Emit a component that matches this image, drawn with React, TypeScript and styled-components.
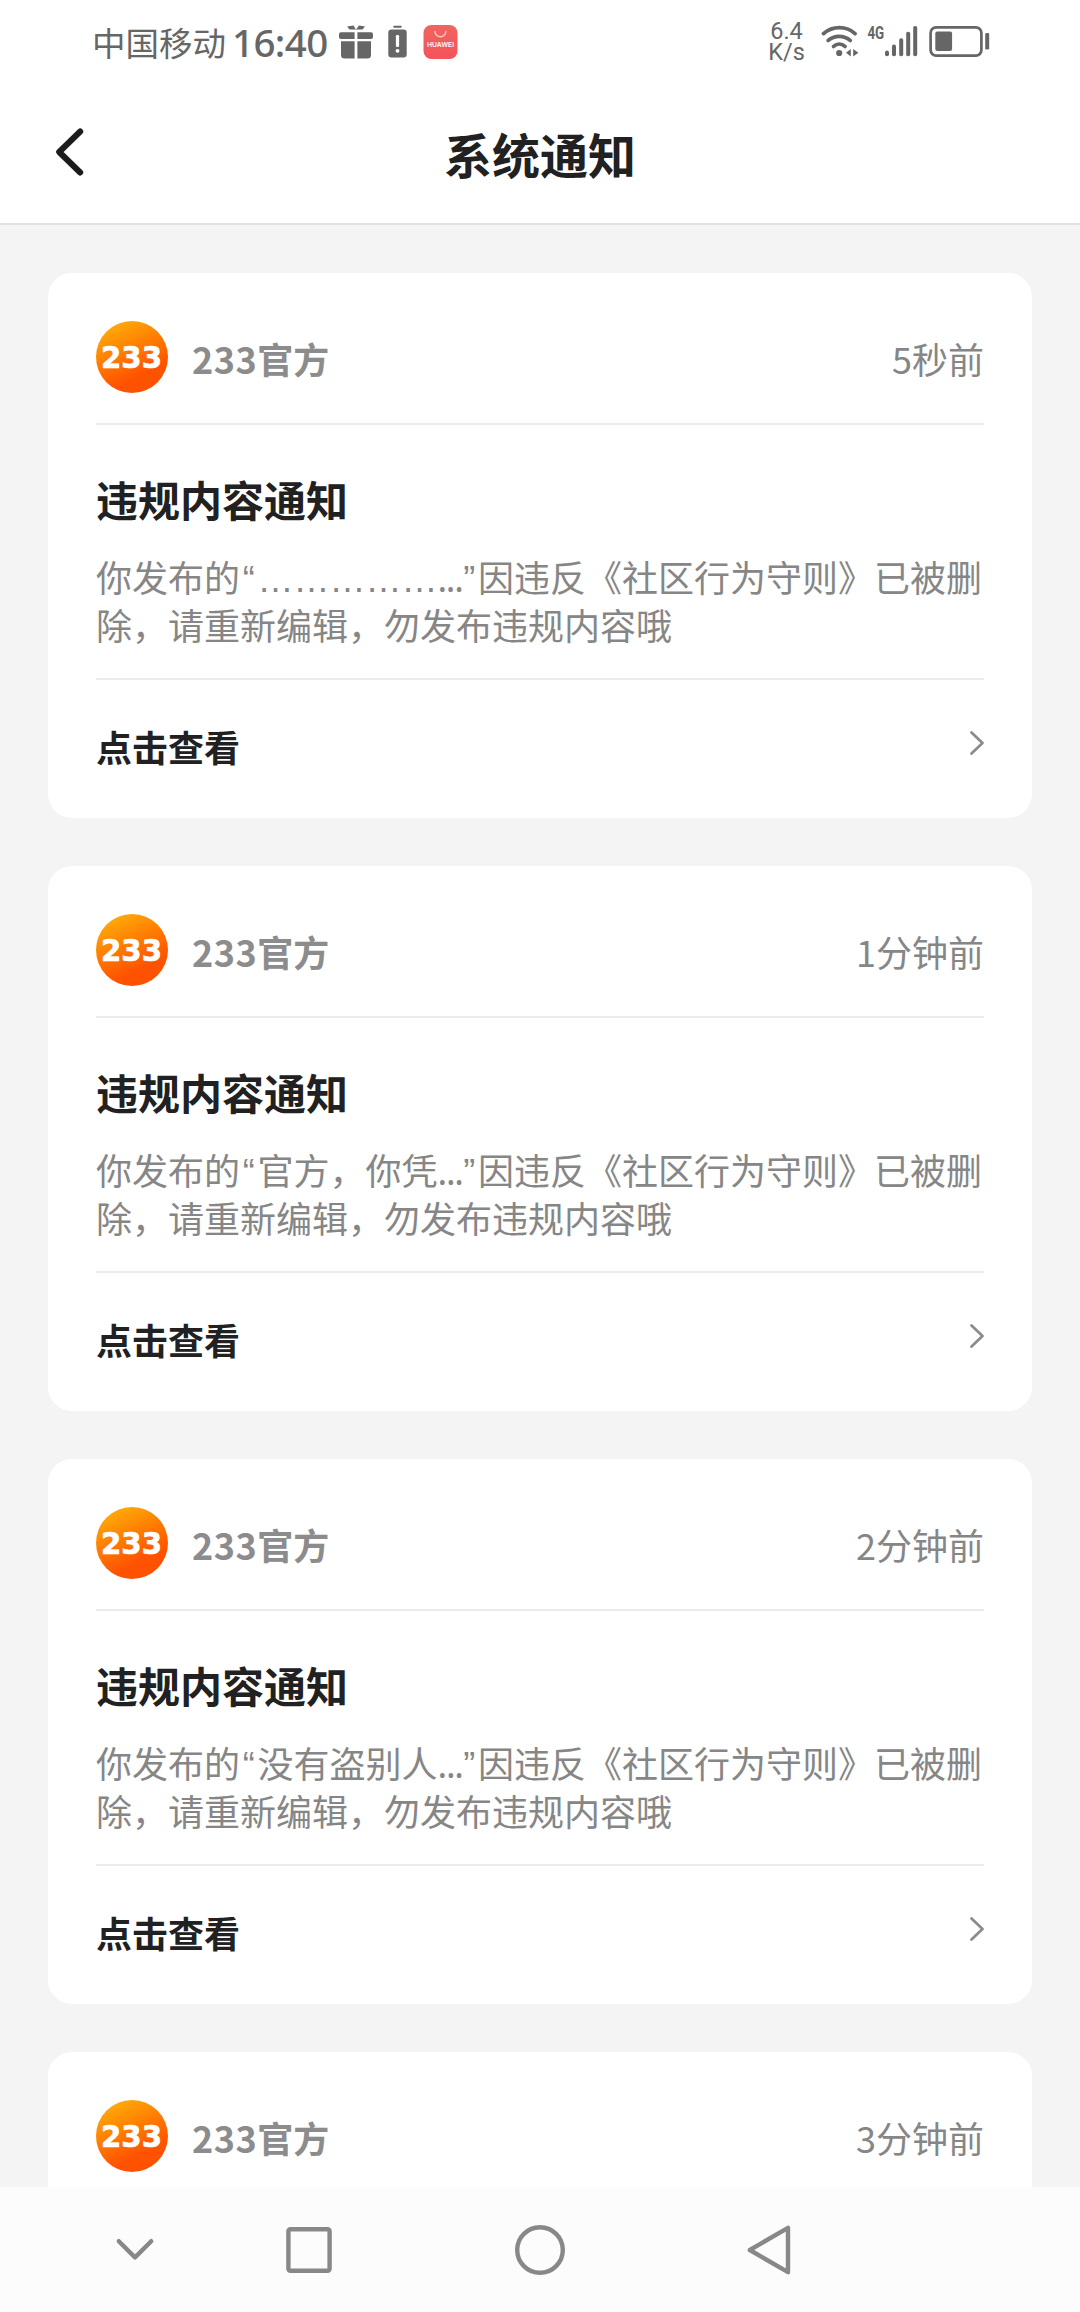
import React from 'react';
import styled, { createGlobalStyle } from 'styled-components';

const GlobalStyle = createGlobalStyle`
  *, *::before, *::after { box-sizing: border-box; }
  body {
    margin: 0;
    background: #f4f4f4;
    font-family: "Noto Sans CJK SC", "Noto Sans", sans-serif;
  }
`;

const Screen = styled.div`
  width: 1080px;
  height: 2312px;
  display: flex;
  flex-direction: column;
  overflow: hidden;
  background: #f4f4f4;
`;

/* ---------- status bar ---------- */

const StatusBar = styled.div`
  flex: none;
  height: 84px;
  padding: 0 90px 0 92px;
  display: flex;
  justify-content: space-between;
  align-items: center;
  background: #fff;
  color: #666;
`;

const StatusGroup = styled.div`
  display: flex;
  align-items: center;
`;

const Carrier = styled.span`
  font-size: 33.5px;
  line-height: 48px;
  margin-right: 6px;
`;

const Clock = styled.span`
  width: 99px;
  font-family: "Noto Sans", sans-serif;
  font-size: 38.5px;
  line-height: 48px;
  font-weight: 500;
  letter-spacing: -0.6px;
  margin-right: 8px;
  white-space: nowrap;
`;

const NetSpeed = styled.div`
  display: flex;
  flex-direction: column;
  align-items: center;
  width: 33px;
  margin-right: 18px;
  font-family: Roboto, sans-serif;
  font-size: 23.5px;
  line-height: 21px;
`;

const StatusIcon = styled.svg<{ $gap?: number }>`
  display: block;
  flex: none;
  margin-left: ${(p) => p.$gap ?? 0}px;
`;

/* ---------- title bar ---------- */

const TitleBar = styled.header`
  flex: none;
  height: 141px;
  padding: 0 52px;
  display: grid;
  grid-template-columns: 60px 1fr 60px;
  align-items: center;
  background: #fff;
  border-bottom: 2px solid #e2e2e2;
`;

const BackButton = styled.button`
  width: 40px;
  height: 56px;
  margin-top: -4px;
  padding: 0;
  border: 0;
  background: none;
`;

const PageTitle = styled.h1`
  margin: -2px 0 0;
  font-size: 48px;
  line-height: 70px;
  font-weight: 700;
  text-align: center;
  color: #212121;
`;

/* ---------- list ---------- */

const List = styled.main`
  flex: 1;
  min-height: 0;
  overflow: hidden;
  padding: 48px 48px 0;
  display: flex;
  flex-direction: column;
  gap: 48px;
`;

const Card = styled.article`
  flex: none;
  height: 545px;
  padding: 48px 48px 0;
  border-radius: 24px;
  background: #fff;
`;

const CardHeader = styled.div`
  height: 104px;
  display: flex;
  align-items: flex-start;
  border-bottom: 2px solid #ebebeb;
`;

const Sender = styled.span`
  margin: 11px 0 0 24px;
  font-size: 36px;
  line-height: 52px;
  font-weight: 700;
  color: #8c8c8c;
`;

const SenderDigits = styled.span`
  letter-spacing: 0.5px;
`;

const Time = styled.time`
  margin: 11px 0 0 auto;
  font-size: 36px;
  line-height: 52px;
  color: #868686;
`;

const CardBody = styled.div`
  height: 255px;
  padding-top: 44px;
  border-bottom: 2px solid #ebebeb;
`;

const CardTitle = styled.h2`
  margin: 0 0 23px;
  font-size: 42px;
  line-height: 60px;
  font-weight: 700;
  color: #212121;
`;

const Message = styled.p`
  margin: 0;
  font-size: 36px;
  line-height: 48px;
  color: #868686;
  white-space: nowrap;
`;

const Quote = styled.span`
  display: inline-block;
  width: 17.5px;
  line-height: 40px;
  font-family: "Liberation Sans", sans-serif;
  text-align: center;
`;

const Dots = styled.span`
  display: inline-block;
  width: 23px;
  line-height: 40px;
  font-family: "Noto Sans", sans-serif;
  letter-spacing: -1.3px;
`;

const Excerpt = styled.span`
  font-family: "Liberation Sans", "Noto Sans CJK SC", sans-serif;
  line-height: 40px;
`;

const CardAction = styled.a`
  height: 131px;
  display: flex;
  justify-content: space-between;
  align-items: center;
  font-size: 36px;
  line-height: 52px;
  font-weight: 700;
  color: #212121;
`;

const ArrowIcon = styled.svg`
  display: block;
  margin: 0 -2px 5px 0;
`;

const AvatarSvg = styled.svg`
  display: block;
  flex: none;
`;

/* ---------- navigation bar ---------- */

const NavBar = styled.nav`
  flex: none;
  height: 125px;
  padding-left: 40px;
  display: grid;
  grid-template-columns: 189px 159px 304px 154px;
  align-items: center;
  justify-items: center;
  background: #fcfcfc;
`;

const NavIcon = styled.svg`
  display: block;
  fill: none;
  stroke: #888;
  stroke-width: 4.4;
  stroke-linecap: round;
  stroke-linejoin: round;
`;

function Avatar() {
  return (
    <AvatarSvg width="72" height="72" viewBox="0 0 72 72">
      <defs>
        <linearGradient id="avatarFill" x1="0.15" y1="0.05" x2="0.6" y2="1">
          <stop offset="0" stopColor="#ffae0a" />
          <stop offset="0.45" stopColor="#ff7a00" />
          <stop offset="0.8" stopColor="#ff5200" />
          <stop offset="1" stopColor="#ff5200" />
        </linearGradient>
      </defs>
      <circle cx="36" cy="36" r="36" fill="url(#avatarFill)" />
      <text
        x="5"
        y="47.4"
        textLength="61"
        lengthAdjust="spacingAndGlyphs"
        fontFamily="'DejaVu Sans', sans-serif"
        fontWeight="700"
        fontSize="31"
        fill="#fff"
        stroke="#fff"
        strokeWidth="0.7"
      >
        233
      </text>
    </AvatarSvg>
  );
}

interface Notice {
  time: string;
  excerpt?: string;
}

const notices: Notice[] = [
  { time: '5秒前', excerpt: '……………' },
  { time: '1分钟前', excerpt: '官方，你凭' },
  { time: '2分钟前', excerpt: '没有盗别人' },
  { time: '3分钟前' },
];

function NoticeCard({ time, excerpt }: Notice) {
  return (
    <Card>
      <CardHeader>
        <Avatar />
        <Sender>
          <SenderDigits>233</SenderDigits>官方
        </Sender>
        <Time>{time}</Time>
      </CardHeader>
      {excerpt && (
        <>
          <CardBody>
            <CardTitle>违规内容通知</CardTitle>
            <Message>
              你发布的<Quote>“</Quote>
              <Excerpt>{excerpt}</Excerpt>
              <Dots>...</Dots>
              <Quote>”</Quote>因违反《社区行为守则》已被删
              <br />
              除，请重新编辑，勿发布违规内容哦
            </Message>
          </CardBody>
          <CardAction>
            点击查看
            <ArrowIcon width="18" height="28" viewBox="0 0 18 28" fill="none">
              <path d="M3.5 3.5 14.5 14 3.5 24.5" stroke="#8c8c8c" strokeWidth="2.8" strokeLinecap="round" strokeLinejoin="round" />
            </ArrowIcon>
          </CardAction>
        </>
      )}
    </Card>
  );
}

export default function App() {
  return (
    <Screen lang="zh-CN">
      <GlobalStyle />
      <StatusBar>
        <StatusGroup>
          <Carrier>中国移动</Carrier>
          <Clock>16:40</Clock>
          <StatusIcon width="34" height="34" viewBox="0 0 34 34" fill="#666">
            <path d="M8 1.5 14.5 0.5 16.6 4 17.4 4 20 0.5 26 1.5 23.5 4.5H10.5z" />
            <path d="M2 7.3H15.6V14H2A2 2 0 0 1 0 12V9.3A2 2 0 0 1 2 7.3zM18.4 7.3H32A2 2 0 0 1 34 9.3V12A2 2 0 0 1 32 14H18.4z" />
            <path d="M2 16.3H15.6V33.5H5.5A3.5 3.5 0 0 1 2 30zM18.4 16.3H32V30A3.5 3.5 0 0 1 28.5 33.5H18.4z" />
          </StatusIcon>
          <StatusIcon $gap={15} width="19" height="34" viewBox="0 0 19 34">
            <rect x="5.3" y="0.8" width="8.4" height="2" rx="0.8" fill="#666" />
            <rect x="0.3" y="4.4" width="18.4" height="28" rx="3.2" fill="#666" />
            <rect x="7.9" y="10" width="3.2" height="12" rx="1.2" fill="#fff" />
            <circle cx="9.5" cy="25.8" r="1.9" fill="#fff" />
          </StatusIcon>
          <StatusIcon $gap={16} width="35" height="35" viewBox="0 0 35 35">
            <defs>
              <linearGradient id="storeFill" x1="0" y1="0" x2="0" y2="1">
                <stop offset="0" stopColor="#f0655e" />
                <stop offset="1" stopColor="#f4535a" />
              </linearGradient>
            </defs>
            <rect x="0.5" y="0" width="34" height="34" rx="8" fill="url(#storeFill)" />
            <path d="M12 6.4A5.4 5.4 0 0 0 22.8 6.4" fill="none" stroke="#fbc9c6" strokeWidth="1.4" strokeLinecap="round" />
            <text x="4" y="22" textLength="27" lengthAdjust="spacingAndGlyphs" fontFamily="Inter, sans-serif" fontWeight="600" fontSize="6.6" fill="#fff">
              HUAWEI
            </text>
          </StatusIcon>
        </StatusGroup>
        <StatusGroup>
          <NetSpeed>
            <span>6.4</span>
            <span>K/s</span>
          </NetSpeed>
          <StatusIcon width="38" height="34" viewBox="0 0 38 34" fill="none" stroke="#666" strokeWidth="3.8" strokeLinecap="round">
            <path d="M2.5 8.6C11.5 0.6 25.5 0.6 34 8.6" />
            <path d="M7.2 15.4C13.4 10 23 10 29.2 15.4" />
            <path d="M12.6 21.4C16 18.4 20.6 18.4 24 21.4" />
            <circle cx="18.2" cy="28" r="3.1" fill="#666" stroke="none" />
            <path d="M29.8 24V31.4L25 27.8zM32.2 24V31.4L37.4 27.8z" fill="#666" stroke="none" />
          </StatusIcon>
          <StatusIcon $gap={8} width="18" height="34" viewBox="0 0 18 34">
            <text x="0.4" y="14.2" textLength="16.8" lengthAdjust="spacingAndGlyphs" fontFamily="Roboto, sans-serif" fontWeight="700" fontSize="18" fill="#666">
              4G
            </text>
          </StatusIcon>
          <StatusIcon width="34" height="32" viewBox="0 0 34 32" fill="#666">
            <rect x="0" y="24.6" width="4" height="5.6" rx="2" />
            <rect x="7" y="18.6" width="4" height="11.6" rx="1.8" />
            <rect x="14.2" y="12.2" width="4" height="18" rx="1.8" />
            <rect x="21.2" y="5.8" width="4" height="24.4" rx="1.8" />
            <rect x="28.2" y="0" width="4" height="30.2" rx="1.8" />
          </StatusIcon>
          <StatusIcon $gap={10} width="61" height="32" viewBox="0 0 61 32">
            <rect x="1.6" y="1.4" width="50.8" height="28.2" rx="5.5" fill="none" stroke="#666" strokeWidth="2.7" />
            <rect x="6.3" y="5.6" width="16.8" height="19.4" rx="2" fill="#666" />
            <rect x="56.2" y="7" width="4" height="16.6" rx="1.4" fill="#666" />
          </StatusIcon>
        </StatusGroup>
      </StatusBar>

      <TitleBar>
        <BackButton aria-label="返回">
          <svg width="40" height="56" viewBox="0 0 40 56" fill="none">
            <path d="M28.2 7.5 7.2 28 28.2 48.5" stroke="#1c1c1c" strokeWidth="6" strokeLinecap="round" strokeLinejoin="round" />
          </svg>
        </BackButton>
        <PageTitle>系统通知</PageTitle>
      </TitleBar>

      <List>
        {notices.map((n) => (
          <NoticeCard key={n.time} {...n} />
        ))}
      </List>

      <NavBar>
        <NavIcon width="42" height="28" viewBox="0 0 42 28">
          <path d="M4.8 5.2 21 21.4 37.2 5.2" />
        </NavIcon>
        <NavIcon width="50" height="50" viewBox="0 0 50 50">
          <rect x="4.4" y="4.2" width="41.2" height="41.6" rx="2" />
        </NavIcon>
        <NavIcon width="54" height="54" viewBox="0 0 54 54">
          <circle cx="27" cy="27" r="22.8" />
        </NavIcon>
        <NavIcon width="48" height="54" viewBox="0 0 48 54">
          <path d="M4.8 27 43 4.8V49.2z" />
        </NavIcon>
      </NavBar>
    </Screen>
  );
}
